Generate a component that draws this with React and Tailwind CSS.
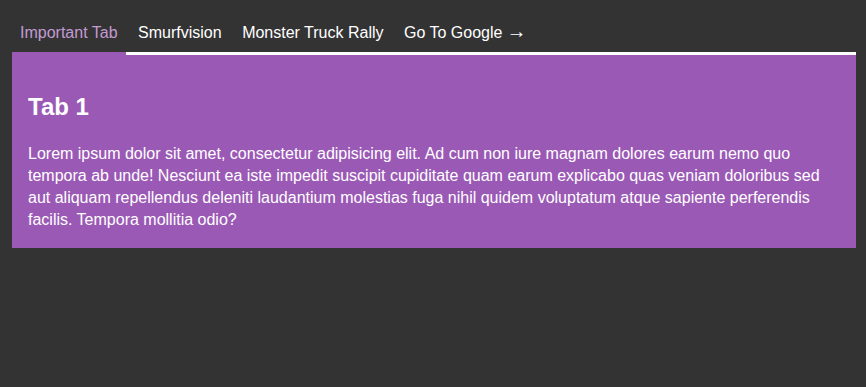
import React, { useState } from 'react';

const tabs = [
  { id: 'important', label: 'Important Tab' },
  { id: 'smurf', label: 'Smurfvision' },
  { id: 'monster', label: 'Monster Truck Rally' },
  { id: 'google', label: 'Go To Google', arrow: true },
];

export default function App() {
  const [active, setActive] = useState('important');

  return (
    <div className="min-h-[387px] bg-[#333333] pl-[12px] pr-[10px] pt-[12px] font-['Liberation_Sans',Arial,sans-serif] text-white">
      {/* Tab strip */}
      <div className="flex gap-[4.5px] border-b-[3px] border-white">
        {tabs.map((tab) => (
          <button
            key={tab.id}
            onClick={() => !tab.arrow && setActive(tab.id)}
            className={`-mb-[3px] h-[43px] px-2 pt-[12px] pb-[10px] text-[16px] leading-[18px] border-b-[3px] cursor-pointer ${
              active === tab.id
                ? 'text-[#c39bd3] border-[#9b59b6]'
                : 'text-white border-transparent'
            }`}
          >
            {tab.label}
            {tab.arrow && <span className="ml-[4px] text-[20px] leading-[0]">{'\u2192'}</span>}
          </button>
        ))}
      </div>

      {/* Panel */}
      <section className="bg-[#9b59b6] px-4 pt-[38px] pb-[17px]">
        <h2 className="text-[24px] leading-[28px] font-bold mb-[22px]">Tab 1</h2>
        <p className="text-[16px] leading-[22px]">
          Lorem ipsum dolor sit amet, consectetur adipisicing elit. Ad cum non iure magnam dolores earum nemo quo
          tempora ab unde! Nesciunt ea iste impedit suscipit cupiditate quam earum explicabo quas veniam doloribus sed
          aut aliquam repellendus deleniti laudantium molestias fuga nihil quidem voluptatum atque sapiente perferendis
          facilis. Tempora mollitia odio?
        </p>
      </section>
    </div>
  );
}
